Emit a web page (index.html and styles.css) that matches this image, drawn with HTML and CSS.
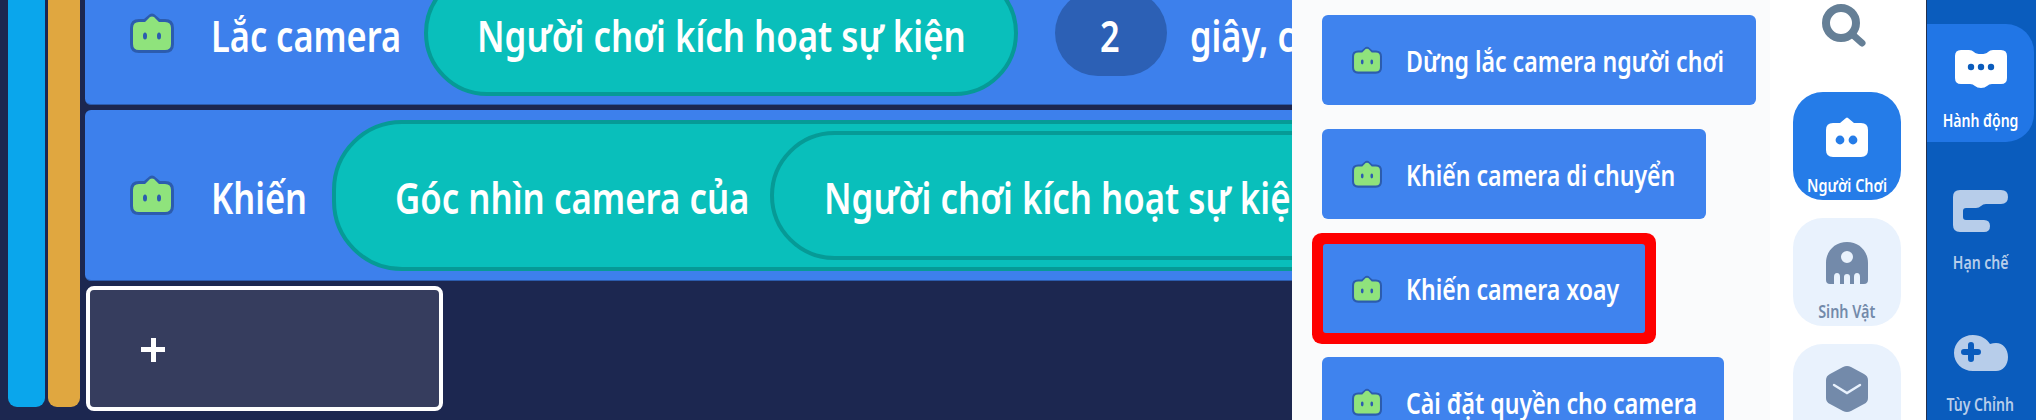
FILE: index.html
```html
<!DOCTYPE html>
<html lang="vi">
<head>
<meta charset="utf-8">
<title>Khối camera</title>
<link rel="stylesheet" href="styles.css">
</head>
<body>
<svg class="defs" width="0" height="0" aria-hidden="true">
  <symbol id="bot" viewBox="0 0 44 40">
    <path class="bot-out" d="M9 6h5l6-5q2-1 4 0l6 5h5q9 0 9 9v16q0 9-9 9H9q-9 0-9-9V15q0-9 9-9z"/>
    <path class="bot-in" d="M9 9h6l5-5q2-1 4 0l5 5h6q6 0 6 6v16q0 6-6 6H9q-6 0-6-6V15q0-6 6-6z"/>
    <ellipse class="bot-eye" cx="15" cy="23" rx="2" ry="3.6"/>
    <ellipse class="bot-eye" cx="29" cy="23" rx="2" ry="3.6"/>
  </symbol>
</svg>
<main class="stage">
  <section class="canvas">
    <div class="stripes"><div class="stripe stripe-blue"></div><div class="stripe stripe-orange"></div></div>
    <div class="stack">
      <div class="block block-shake">
        <svg class="bot"><use href="#bot"/></svg>
        <span class="lbl t-shake">Lắc camera</span>
        <span class="pill pill-a"><span class="lbl t-player">Người chơi kích hoạt sự kiện</span></span>
        <span class="num"><span class="lbl t-num">2</span></span>
        <span class="lbl t-sec">giây, c</span>
      </div>
      <div class="block block-make">
        <svg class="bot"><use href="#bot"/></svg>
        <span class="lbl t-make">Khiến</span>
        <span class="pill pill-b">
          <span class="lbl t-view">Góc nhìn camera của</span>
          <span class="pill pill-c"><span class="lbl t-player">Người chơi kích hoạt sự kiện</span></span>
        </span>
      </div>
      <div class="add"><span class="plus"></span></div>
    </div>
  </section>
  <section class="palette">
    <div class="pbtn w1"><svg class="pbot"><use href="#bot"/></svg><span class="plbl">Dừng lắc camera người chơi</span></div>
    <div class="pbtn w2"><svg class="pbot"><use href="#bot"/></svg><span class="plbl">Khiến camera di chuyển</span></div>
    <div class="pbtn w3"><svg class="pbot"><use href="#bot"/></svg><span class="plbl">Khiến camera xoay</span></div>
    <div class="pbtn w4"><svg class="pbot"><use href="#bot"/></svg><span class="plbl">Cài đặt quyền cho camera</span></div>
  </section>
  <nav class="cats">
    <svg class="search" viewBox="0 0 44 44"><circle cx="19" cy="20" r="15" fill="none" stroke="currentColor" stroke-width="8"/><path d="M31 32l9 8" fill="none" stroke="currentColor" stroke-width="7" stroke-linecap="round"/></svg>
    <div class="cat cat-on">
      <svg class="cat-ic" viewBox="0 0 42 40"><path fill="currentColor" d="M7 6h7l6-5q1-1 2 0l6 5h7q7 0 7 7v20q0 7-7 7H7q-7 0-7-7V13q0-7 7-7z"/><circle class="eye-on" cx="14" cy="23" r="4.4"/><circle class="eye-on" cx="27" cy="23" r="4.4"/></svg>
      <span class="cat-lbl">Người Chơi</span>
    </div>
    <div class="cat">
      <svg class="cat-ic" viewBox="0 0 42 42"><path fill="currentColor" fill-rule="evenodd" d="M21 0c12 0 21 9 21 21v17q0 4-4 4h-4v-7q0-4-3-4t-3 4v7h-4v-7q0-3-3-3t-3 3v7h-4v-7q0-4-3-4t-3 4v7H4q-4 0-4-4V21C0 9 9 0 21 0zm0 9a6 6 0 1 0 0 12 6 6 0 0 0 0-12z"/></svg>
      <span class="cat-lbl">Sinh Vật</span>
    </div>
    <div class="cat">
      <svg class="cat-ic cat-hex" viewBox="0 0 42 46"><path fill="currentColor" d="M17 1q4-2 8 0l13 7q4 2 4 6v18q0 4-4 6l-13 7q-4 2-8 0L4 38q-4-2-4-6V14q0-4 4-6z"/><path d="M8 19l13 8 13-8" fill="none" stroke="#e9f2fd" stroke-width="2.4" stroke-linecap="round"/></svg>
    </div>
  </nav>
  <aside class="rail">
    <div class="rtab rtab-on">
      <svg class="rail-ic" viewBox="0 0 56 42"><path fill="currentColor" d="M8 2h8q3 0 5 2t7 2q5 0 7-2t5-2h8q6 0 6 6v22q0 6-6 6h-9q-3 0-5 2t-6 2q-4 0-6-2t-5-2H8q-6 0-6-6V8q0-6 6-6z"/><circle class="rail-dot" cx="18" cy="19" r="3.2"/><circle class="rail-dot" cx="28" cy="19" r="3.2"/><circle class="rail-dot" cx="38" cy="19" r="3.2"/></svg>
      <span class="rail-lbl">Hành động</span>
    </div>
    <div class="rtab">
      <svg class="rail-ic" viewBox="0 0 56 42"><path fill="currentColor" d="M7 0H48q7 0 7 7t-7 7H33q-3 0-5 2t-5 2H13q-3 0-3 3v6q0 3 3 3H31q6 0 6 6t-6 6H7q-7 0-7-7V7q0-7 7-7z"/></svg>
      <span class="rail-lbl">Hạn chế</span>
    </div>
    <div class="rtab">
      <svg class="rail-ic rail-cloud" viewBox="0 0 56 38"><path fill="currentColor" d="M20 1c8 0 14 4 17 9q3-1 6-1c7 0 12 6 12 14 0 8-5 14-12 14H20C9 37 1 29 1 19S9 1 20 1z"/><path class="rail-plus" d="M18 11v14M11 18h14"/></svg>
      <span class="rail-lbl">Tùy Chỉnh</span>
    </div>
  </aside>
</main>
</body>
</html>
```
FILE: styles.css
```css
* { box-sizing: border-box; }
html, body { margin: 0; height: 420px; overflow: hidden; background: #1c2750; }
body { font-family: "Noto Sans", "Open Sans", sans-serif; color: #fff; }
.defs { position: absolute; }
.stage { display: flex; width: 2036px; height: 420px; overflow: hidden; }

.canvas { width: 1292px; flex: none; display: flex; overflow: hidden; padding-left: 8px; background: #1c2750; }
.stripes { display: flex; gap: 3px; width: 72px; flex: none; height: 407px; }
.stripe { border-radius: 0 0 9px 9px; }
.stripe-blue { width: 37px; background: #0aa6ec; }
.stripe-orange { width: 32px; background: #e0a740; }
.stack { margin-left: 5px; margin-top: -39px; flex: none; width: 1300px; }

.block { display: flex; align-items: center; background: #3d80ec; border-bottom: 1px solid #2c5cae; border-radius: 6px 0 0 6px; padding-left: 45px; white-space: nowrap; }
.block-shake { height: 144px; margin-bottom: 5px; }
.block-make { height: 171px; }
.bot { width: 44px; height: 40px; flex: none; margin-right: 37px; }
.bot-out { fill: #2c5cae; }
.bot-in { fill: #8fe37c; }
.bot-eye { fill: #2c5cae; }

/* Reference text is a horizontally squeezed Noto Sans: the box keeps the visual width, the glyphs are narrowed. */
.lbl { flex: none; display: block; font-size: 43px; font-weight: 600; line-height: 1; margin-top: 5px; white-space: nowrap; transform: scaleX(.8); transform-origin: 0 50%; }
.t-shake { width: 189px; }
.t-make { width: 97px; }
.t-player { width: 490px; transform: scaleX(.81); }
.t-view { width: 353px; transform: scaleX(.81); }
.t-num { width: 26px; }
.t-sec { width: 90px; }

.pill { display: flex; align-items: center; background: #09bfbb; border: 4px solid #069a96; border-radius: 70px; flex: none; }
.pill-a { width: 594px; height: 126px; margin-left: 24px; padding-left: 49px; }
.pill-b { width: 1200px; height: 151px; margin-left: 24px; padding-left: 59px; }
.pill-c { width: 800px; height: 129px; margin-left: 22px; padding-left: 50px; }
.num { display: flex; justify-content: center; align-items: center; width: 112px; height: 86px; border-radius: 43px; background: #2c60b5; margin-left: 37px; margin-right: 23px; padding-left: 3px; flex: none; }

.add { width: 357px; height: 125px; margin-top: 5px; margin-left: 1px; background: #363d5e; border: 4px solid #fff; border-radius: 8px; display: flex; align-items: center; padding-left: 51px; }
.plus { width: 24px; height: 24px; margin-top: 2px; background: linear-gradient(#fff, #fff) center / 24px 5px no-repeat, linear-gradient(#fff, #fff) center / 5px 24px no-repeat; }

.palette { width: 478px; flex: none; background: #fafbfc; padding: 15px 0 0 30px; display: flex; flex-direction: column; }
.pbtn { display: flex; align-items: center; height: 90px; background: #3f83ee; border-radius: 6px; padding-left: 30px; flex: none; white-space: nowrap; }
.pbot { width: 30px; height: 28px; flex: none; margin-right: 24px; }
.plbl { flex: none; width: 300px; font-size: 28px; font-weight: 600; line-height: 1.2; margin-top: 3px; transform: scaleX(.825); transform-origin: 0 50%; }
.w1 { width: 434px; margin-bottom: 24px; }
.w2 { width: 384px; margin-bottom: 25px; }
.w3 { width: 322px; height: 89px; margin-left: 1px; margin-bottom: 24px; padding-left: 29px; box-shadow: 0 0 0 11px #fe0000; border-radius: 3px; }
.w4 { width: 402px; }

.cats { width: 156px; flex: none; background: #fff; padding-right: 2px; display: flex; flex-direction: column; align-items: center; }
.search { width: 44px; height: 44px; margin: 3px 6px 45px 0; color: #657f96; flex: none; }
.cat { width: 108px; height: 108px; flex: none; border-radius: 30px; background: #e9f2fd; color: #738aaa; margin-bottom: 18px; display: flex; flex-direction: column; align-items: center; padding-top: 24px; }
.cat-on { background: #257ce8; color: #fff; }
.cat-ic { width: 42px; height: 42px; flex: none; }
.cat-hex { height: 46px; margin-top: -2px; }
.eye-on { fill: #257ce8; }
.cat-lbl { flex: none; font-size: 18px; font-weight: 600; line-height: 24px; margin-top: 15px; white-space: nowrap; transform: scaleX(.8); }

.rail { width: 110px; flex: none; background: #0a5cbd; border-left: 1px solid #22304f; padding-top: 24px; display: flex; flex-direction: column; color: #b7cdea; }
.rtab { width: 107px; height: 118px; flex: none; margin-bottom: 24px; display: flex; flex-direction: column; align-items: center; padding-top: 24px; }
.rtab-on { background: #2176e6; color: #fff; border-radius: 0 28px 28px 0; }
.rail-ic { width: 56px; height: 42px; flex: none; }
.rail-cloud { height: 38px; margin-top: 2px; margin-bottom: 2px; }
.rail-dot { fill: #0a5cbd; }
.rail-plus { fill: none; stroke: #0a5cbd; stroke-width: 6; stroke-linecap: round; }
.rail-lbl { flex: none; font-size: 18px; font-weight: 600; line-height: 24px; margin-top: 18px; white-space: nowrap; transform: scaleX(.78); }
```
